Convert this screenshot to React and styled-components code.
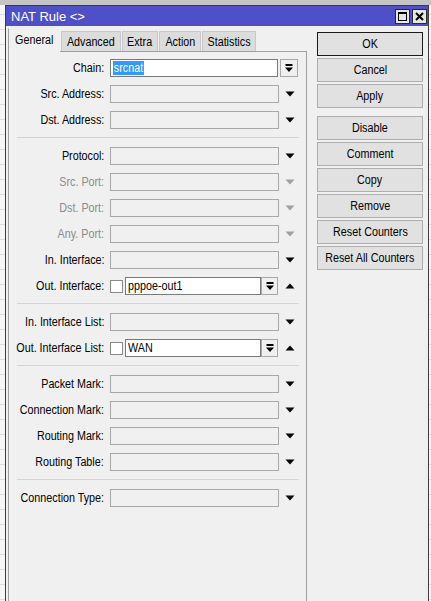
import React from "react";
import styled, { createGlobalStyle } from "styled-components";

const UI_FONT = `"Liberation Sans", Arial, sans-serif`;

const GlobalStyle = createGlobalStyle`
  html, body { margin: 0; padding: 0; }
  body { font-family: ${UI_FONT}; font-size: 12.5px; color: #000; }
  * { box-sizing: border-box; }
`;

/* Condensed caption text: the dialog face is a tall, narrow sans */
const Narrow = styled.span`
  display: inline-block;
  white-space: nowrap;
  transform: scaleX(0.86);
  transform-origin: ${(p) => p.$origin || "left"} center;
`;

const Desktop = styled.div`
  width: 431px;
  height: 601px;
  overflow: hidden;
  padding: 5px 0 0 5px;
  display: flex;
  background:
    linear-gradient(#c4c4c4, #c4c4c4) top left / 100% 5px no-repeat,
    repeating-linear-gradient(to bottom, #f7f7f7 0 14px, #dcdcdc 14px 15px);
`;

const Window = styled.div`
  width: 424px;
  flex: none;
  display: flex;
  flex-direction: column;
  border: 1px solid #3c3c3c;
  border-bottom: none;
  background: #f0f0f0;
`;

const TitleBar = styled.div`
  height: 20px;
  flex: none;
  display: flex;
  align-items: center;
  justify-content: space-between;
  padding: 0 1px 0 5px;
  background: #4f50c8;
  color: #fff;
  font-size: 13px;
`;

const TitleButtons = styled.div`
  display: flex;
  gap: 2px;
`;

const TitleButton = styled.div`
  width: 15px;
  height: 15px;
  display: flex;
  align-items: center;
  justify-content: center;
  background: #e6e6e6;
  border: 1px solid #2a2a2a;
`;

const Body = styled.div`
  flex: 1;
  display: flex;
  padding-top: 2px;
`;

const LeftPane = styled.div`
  width: 301px;
  padding-left: 2px;
  display: flex;
  flex-direction: column;
`;

const TabStrip = styled.div`
  height: 23px;
  display: flex;
  align-items: flex-end;
  gap: 1px;
`;

const Tab = styled.div`
  position: relative;
  width: ${(p) => p.$w}px;
  height: ${(p) => (p.$active ? 24 : 20)}px;
  margin-bottom: ${(p) => (p.$active ? -1 : 0)}px;
  display: flex;
  align-items: ${(p) => (p.$active ? "flex-start" : "center")};
  justify-content: center;
  padding-top: ${(p) => (p.$active ? 4 : 0)}px;
  background: ${(p) => (p.$active ? "#f0f0f0" : "#dcdcdc")};
  border: 1px solid ${(p) => (p.$active ? "#f0f0f0" : "#c8c8c8")};
  border-left-color: ${(p) => (p.$active ? "#a0a0a0" : "#c8c8c8")};
  border-bottom: none;
  z-index: ${(p) => (p.$active ? 1 : 0)};
`;

const Panel = styled.div`
  flex: 1;
  border: 1px solid #a0a0a0;
  border-bottom: none;
  padding-top: 7px;
  display: flex;
  flex-direction: column;
  gap: 8px;
`;

const Row = styled.div`
  height: 18px;
  display: flex;
  align-items: center;
`;

const Label = styled.div`
  width: 95px;
  margin-right: 6px;
  display: flex;
  justify-content: flex-end;
  color: ${(p) => (p.$disabled ? "#8c8c8c" : "#000")};
`;

const Field = styled.div`
  width: ${(p) => p.$w || 169}px;
  height: 18px;
  display: flex;
  align-items: center;
  padding-left: 2px;
  background: ${(p) => (p.$filled ? "#fff" : "#f0f0f0")};
  border: 1px solid ${(p) => (p.$filled ? "#7a7a7a" : "#a8a8a8")};
  overflow: hidden;
`;

const Selected = styled.span`
  background: #3399ff;
  color: #fff;
  padding: 0 1px;
  line-height: 15px;
`;

const ComboButton = styled.div`
  width: ${(p) => p.$w}px;
  height: 18px;
  margin-left: ${(p) => p.$gap}px;
  display: flex;
  align-items: center;
  justify-content: center;
  background: #f0f0f0;
  border: 1px solid #a8a8a8;
`;

const ArrowCell = styled.div`
  width: 20px;
  height: 18px;
  margin-left: ${(p) => p.$gap || 1}px;
  display: flex;
  align-items: center;
  justify-content: center;
`;

const Check = styled.div`
  width: 13px;
  height: 13px;
  margin-right: 2px;
  background: #fff;
  border: 1px solid #8a8a8a;
`;

const Separator = styled.div`
  height: 2px;
  margin: 0 7px 0 8px;
  border-top: 1px solid #d4d4d4;
`;

const RightPane = styled.div`
  padding: 4px 0 0 10px;
  display: flex;
  flex-direction: column;
  gap: 2px;
`;

const Button = styled.div`
  width: 106px;
  height: 24px;
  margin-top: ${(p) => p.$gapAbove || 0}px;
  display: flex;
  align-items: center;
  justify-content: center;
  background: #e1e1e1;
  border: 1px solid ${(p) => (p.$default ? "#1a1a1a" : "#adadad")};
`;

const Down = ({ color = "#000" }) => (
  <svg width="10" height="6" viewBox="0 0 10 6">
    <polygon points="0.5,0.5 9.5,0.5 5,5.5" fill={color} />
  </svg>
);

const Up = () => (
  <svg width="10" height="6" viewBox="0 0 10 6">
    <polygon points="0.5,5.5 9.5,5.5 5,0.5" fill="#000" />
  </svg>
);

const BarDown = () => (
  <svg width="8" height="9" viewBox="0 0 8 9">
    <rect x="0.5" y="0" width="7" height="2" fill="#000" />
    <polygon points="0,3.5 8,3.5 4,8" fill="#000" />
  </svg>
);

const MaxIcon = () => (
  <svg width="9" height="9" viewBox="0 0 9 9">
    <rect x="0.5" y="0.5" width="8" height="8" fill="none" stroke="#000" />
    <rect x="0" y="0" width="9" height="2" fill="#000" />
  </svg>
);

const CloseIcon = () => (
  <svg width="9" height="9" viewBox="0 0 9 9">
    <path d="M1 1 L8 8 M8 1 L1 8" stroke="#000" strokeWidth="2" />
  </svg>
);

const SelectRow = ({ label, disabled }) => (
  <Row>
    <Label $disabled={disabled}>
      <Narrow $origin="right">{label}:</Narrow>
    </Label>
    <Field />
    <ArrowCell>
      <Down color={disabled ? "#a0a0a0" : "#000"} />
    </ArrowCell>
  </Row>
);

const ToggleRow = ({ label, value }) => (
  <Row>
    <Label>
      <Narrow $origin="right">{label}:</Narrow>
    </Label>
    <Check />
    <Field $filled $w={136}>
      <Narrow>{value}</Narrow>
    </Field>
    <ComboButton $w={17} $gap={0}>
      <BarDown />
    </ComboButton>
    <ArrowCell $gap={2}>
      <Up />
    </ArrowCell>
  </Row>
);

const tabs = [
  { name: "General", w: 52, active: true },
  { name: "Advanced", w: 60 },
  { name: "Extra", w: 36 },
  { name: "Action", w: 42 },
  { name: "Statistics", w: 54 },
];

const actions = [
  { name: "OK", isDefault: true },
  { name: "Cancel" },
  { name: "Apply" },
  { name: "Disable", gapAbove: 6 },
  { name: "Comment" },
  { name: "Copy" },
  { name: "Remove" },
  { name: "Reset Counters" },
  { name: "Reset All Counters" },
];

export default function App() {
  return (
    <>
      <GlobalStyle />
      <Desktop>
        <Window>
          <TitleBar>
            <span>NAT Rule &lt;&gt;</span>
            <TitleButtons>
              <TitleButton>
                <MaxIcon />
              </TitleButton>
              <TitleButton>
                <CloseIcon />
              </TitleButton>
            </TitleButtons>
          </TitleBar>
          <Body>
            <LeftPane>
              <TabStrip>
                {tabs.map((t) => (
                  <Tab key={t.name} $w={t.w} $active={t.active}>
                    <Narrow $origin="center">{t.name}</Narrow>
                  </Tab>
                ))}
              </TabStrip>
              <Panel>
                <Row>
                  <Label>
                    <Narrow $origin="right">Chain:</Narrow>
                  </Label>
                  <Field $filled $w={168}>
                    <Narrow>
                      <Selected>srcnat</Selected>
                    </Narrow>
                  </Field>
                  <ComboButton $w={18} $gap={2}>
                    <BarDown />
                  </ComboButton>
                </Row>
                <SelectRow label="Src. Address" />
                <SelectRow label="Dst. Address" />
                <Separator />
                <SelectRow label="Protocol" />
                <SelectRow label="Src. Port" disabled />
                <SelectRow label="Dst. Port" disabled />
                <SelectRow label="Any. Port" disabled />
                <SelectRow label="In. Interface" />
                <ToggleRow label="Out. Interface" value="pppoe-out1" />
                <Separator />
                <SelectRow label="In. Interface List" />
                <ToggleRow label="Out. Interface List" value="WAN" />
                <Separator />
                <SelectRow label="Packet Mark" />
                <SelectRow label="Connection Mark" />
                <SelectRow label="Routing Mark" />
                <SelectRow label="Routing Table" />
                <Separator />
                <SelectRow label="Connection Type" />
              </Panel>
            </LeftPane>
            <RightPane>
              {actions.map((a) => (
                <Button key={a.name} $default={a.isDefault} $gapAbove={a.gapAbove}>
                  <Narrow $origin="center">{a.name}</Narrow>
                </Button>
              ))}
            </RightPane>
          </Body>
        </Window>
      </Desktop>
    </>
  );
}
